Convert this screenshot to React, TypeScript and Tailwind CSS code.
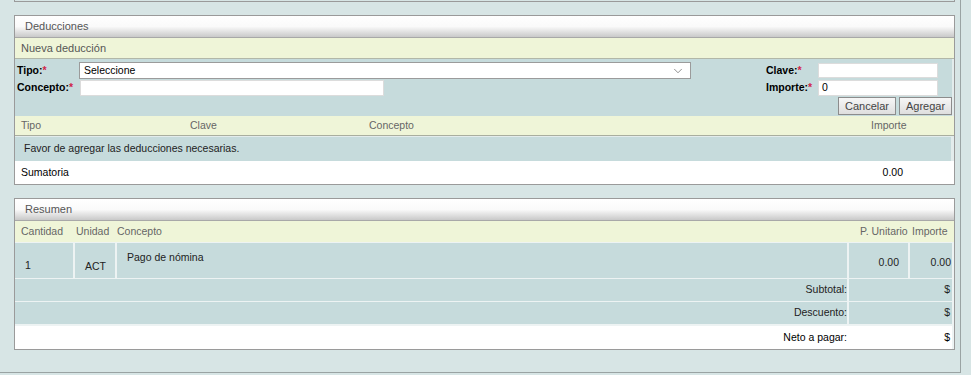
import { ChevronDown } from "lucide-react";

const font = "font-['Liberation_Sans',Arial,sans-serif]";

function PanelHeader({ title }: { title: string }) {
  return (
    <div className="h-[22px] flex items-center pl-[10px] bg-gradient-to-b from-white via-[#fafafa] to-[#c9c9c9] border-b border-[#a8a8a8] text-[11px] text-[#555]">
      {title}
    </div>
  );
}

function Req() {
  return <span className="text-[#d0244a]">*</span>;
}

export default function App() {
  return (
    <div className={`w-[971px] h-[375px] bg-[#d7e5e5] overflow-hidden ${font} text-[10.5px] text-[#222]`}>
      <div className="w-[961px] h-[373px] border-r border-b border-[#9aa3a3]">
        {/* tail of the panel above */}
        <div className="ml-[14px] w-[941px] h-[2px] border-x border-b border-[#9a9a9a]" />

        {/* Deducciones */}
        <div className="mt-[13px] ml-[14px] w-[941px] border border-[#9a9a9a] bg-[#e3ecec]">
          <PanelHeader title="Deducciones" />
          <div className="h-[21px] flex items-center pl-[6px] bg-[#eff5d8] border-b border-[#b2b7a8] text-[#555] text-[11px]">
            Nueva deducción
          </div>

          {/* form */}
          <div className="h-[57px] mr-[2px] bg-[#c6dbdc] pt-[3px] flex flex-col">
            <div className="h-[17px] flex items-center">
              <div className="w-[64px] pl-[2px] font-bold text-black">
                Tipo:<Req />
              </div>
              <div className="w-[612px] h-[17px] bg-white border border-[#9b9b9b] flex items-center pl-[4px] pr-[5px] text-black">
                <span className="flex-1">Seleccione</span>
                <ChevronDown size={14} strokeWidth={1.1} className="text-[#555]" />
              </div>
              <div className="flex-1" />
              <div className="w-[52px] font-bold text-black">
                Clave:<Req />
              </div>
              <div className="w-[120px] h-[15px] bg-white border border-[#dcdcdc] mr-[14px]" />
            </div>
            <div className="h-[17px] flex items-center">
              <div className="w-[65px] pl-[2px] font-bold text-black">
                Concepto:<Req />
              </div>
              <div className="w-[304px] h-[16px] bg-white border border-[#dcdcdc]" />
              <div className="flex-1" />
              <div className="w-[52px] font-bold text-black">
                Importe:<Req />
              </div>
              <div className="w-[120px] h-[16px] bg-white border border-[#dcdcdc] mr-[14px] flex items-center pl-[3px] text-black">
                0
              </div>
            </div>
            <div className="h-[19px] flex items-center justify-end gap-[3px]">
              <button className="w-[58px] h-[18px] border border-[#8c8c8c] bg-gradient-to-b from-[#f6f6f6] to-[#dedede] text-[#444] text-[11px]">
                Cancelar
              </button>
              <button className="w-[53px] h-[18px] border border-[#8c8c8c] bg-gradient-to-b from-[#f6f6f6] to-[#dedede] text-[#444] text-[11px]">
                Agregar
              </button>
            </div>
          </div>

          {/* table */}
          <div className="h-[20px] flex items-center pl-[6px] bg-[#eff5d8] border-b border-[#a9ae9f] text-[#666]">
            <span className="w-[169px]">Tipo</span>
            <span className="w-[179px]">Clave</span>
            <span className="w-[502px]">Concepto</span>
            <span>Importe</span>
          </div>
          <div className="mt-[1px] h-[24px] mr-[3px] bg-[#c6dbdc] flex items-center pl-[9px]">
            Favor de agregar las deducciones necesarias.
          </div>
          <div className="h-[23px] bg-white flex items-center pl-[6px] pr-[51px] text-black">
            <span className="flex-1">Sumatoria</span>
            <span>0.00</span>
          </div>
        </div>

        {/* Resumen */}
        <div className="mt-[13px] ml-[14px] w-[941px] border border-[#9a9a9a] bg-[#edf3f3]">
          <PanelHeader title="Resumen" />
          <div className="h-[21px] flex items-center bg-[#eff5d8] text-[#666]">
            <span className="w-[61px] pl-[6px]">Cantidad</span>
            <span className="w-[41px]">Unidad</span>
            <span className="flex-1">Concepto</span>
            <span className="w-[52px]">P. Unitario</span>
            <span className="w-[42px] whitespace-nowrap overflow-hidden">Importe</span>
          </div>
          <div className="mt-[1px] flex flex-col gap-[1px]">
            <div className="h-[35px] flex gap-[2px] mr-[2px]">
              <div className="w-[58px] bg-[#c6dbdc] flex items-center pl-[10px] pt-[10px]">1</div>
              <div className="w-[40px] bg-[#c6dbdc] flex items-center pl-[10px] pt-[12px]">ACT</div>
              <div className="flex-1 bg-[#c6dbdc] pl-[10px] pt-[7px]">Pago de nómina</div>
              <div className="w-[59px] bg-[#c6dbdc] flex items-center justify-end pr-[9px] pt-[5px]">0.00</div>
              <div className="w-[42px] bg-[#c6dbdc] flex items-center justify-end pr-[1px] pt-[5px]">0.00</div>
            </div>
            <div className="h-[22px] flex gap-[2px] mr-[2px]">
              <div className="flex-1 bg-[#c6dbdc] flex items-center justify-end">Subtotal:</div>
              <div className="w-[103px] bg-[#c6dbdc] flex items-center justify-end pr-[2px]">$</div>
            </div>
            <div className="h-[22px] flex gap-[2px] mr-[2px]">
              <div className="flex-1 bg-[#c6dbdc] flex items-center justify-end">Descuento:</div>
              <div className="w-[103px] bg-[#c6dbdc] flex items-center justify-end pr-[2px]">$</div>
            </div>
            <div className="mt-[1px] h-[23px] flex gap-[2px] bg-white mr-[2px] text-black">
              <div className="flex-1 flex items-center justify-end">Neto a pagar:</div>
              <div className="w-[103px] flex items-center justify-end pr-[2px]">$</div>
            </div>
          </div>
        </div>
      </div>
    </div>
  );
}
